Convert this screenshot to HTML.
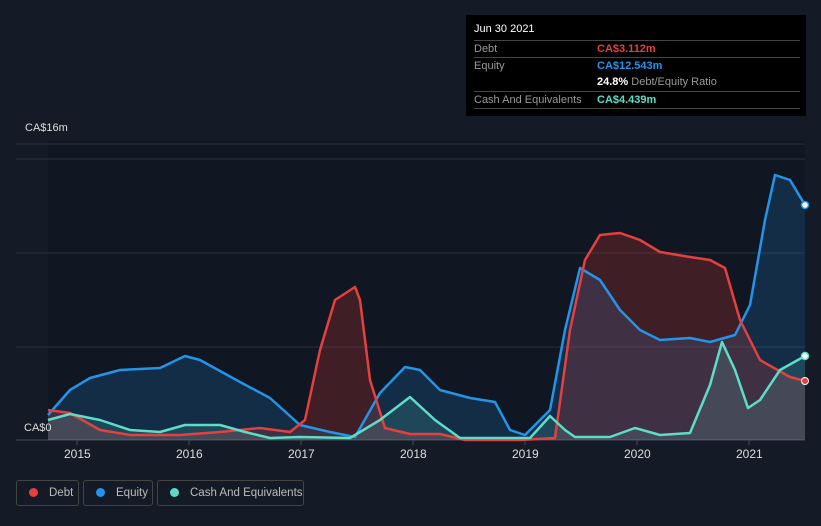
<!DOCTYPE html><html><head><style>
body{margin:0;width:821px;height:526px;background:#151b26;font-family:"Liberation Sans",sans-serif;overflow:hidden;position:relative}
.t{position:absolute;color:#ddd;font-size:11px}
.tip{position:absolute;left:466px;top:15px;width:340px;height:101px;background:#000;}
.r{position:absolute;left:8px;right:6px;font-size:11px;color:#999;border-top:1px solid #444;height:17px;line-height:17px}
.lg{position:absolute;top:480px;height:26px;border:1px solid #444;border-radius:3px;color:#bbb;font-size:11.5px;line-height:24px;box-sizing:border-box;white-space:nowrap;overflow:hidden}
.lg i{display:inline-block;width:9px;height:9px;border-radius:50%;margin:0 11px 0 12px;vertical-align:-1px}
</style></head><body>
<svg width="821" height="526" style="position:absolute;left:0;top:0">
<rect x="48" y="140" width="757" height="300" fill="#111722"/>
<g stroke="#2a303b" stroke-width="1"><line x1="16" y1="144" x2="805" y2="144"/><line x1="16" y1="159" x2="805" y2="159"/><line x1="16" y1="253" x2="805" y2="253"/><line x1="16" y1="347" x2="805" y2="347"/></g>
<line x1="16" y1="440" x2="805" y2="440" stroke="#444b55"/>
<g stroke="#444b55"><line x1="77" y1="440" x2="77" y2="445"/><line x1="189" y1="440" x2="189" y2="445"/><line x1="301" y1="440" x2="301" y2="445"/><line x1="413" y1="440" x2="413" y2="445"/><line x1="525" y1="440" x2="525" y2="445"/><line x1="637" y1="440" x2="637" y2="445"/><line x1="749" y1="440" x2="749" y2="445"/></g>
<g stroke-width="2.5" stroke-linejoin="round">
<polygon fill="rgba(33,150,243,0.18)" stroke="none" points="48,440 48,415 70,390 90,378 120,370 160,368 185,356 200,360 240,382 270,398 300,425 330,432 355,437 380,393 405,367 420,370 440,390 470,398 495,402 510,430 525,435 550,410 565,330 580,268 600,280 620,310 640,330 660,340 690,338 710,342 735,335 750,305 765,220 775,175 790,180 805,205 805,440"/>
<polygon fill="rgba(229,57,53,0.22)" stroke="none" points="48,440 48,410 70,413 100,430 130,435 180,435 220,432 260,428 290,432 305,420 320,350 335,300 355,287 360,300 370,380 385,428 410,434 440,434 465,440 520,440 555,438 570,330 585,260 600,235 620,233 640,240 660,252 690,257 710,260 725,268 740,320 760,360 790,377 805,381 805,440"/>
<polygon fill="rgba(100,220,200,0.15)" stroke="none" points="48,440 48,420 70,414 100,420 130,430 160,432 185,425 220,425 245,432 270,438 300,437 350,438 380,420 410,397 435,420 460,438 500,438 530,438 550,416 565,430 575,437 610,437 635,428 660,435 690,433 710,385 722,342 735,370 748,408 760,400 780,370 805,356 805,440"/>
<polyline fill="none" stroke="#2394e8" points="48,415 70,390 90,378 120,370 160,368 185,356 200,360 240,382 270,398 300,425 330,432 355,437 380,393 405,367 420,370 440,390 470,398 495,402 510,430 525,435 550,410 565,330 580,268 600,280 620,310 640,330 660,340 690,338 710,342 735,335 750,305 765,220 775,175 790,180 805,205"/>
<polyline fill="none" stroke="#e5403f" points="48,410 70,413 100,430 130,435 180,435 220,432 260,428 290,432 305,420 320,350 335,300 355,287 360,300 370,380 385,428 410,434 440,434 465,440 520,440 555,438 570,330 585,260 600,235 620,233 640,240 660,252 690,257 710,260 725,268 740,320 760,360 790,377 805,381"/>
<polyline fill="none" stroke="#5fdcc8" points="48,420 70,414 100,420 130,430 160,432 185,425 220,425 245,432 270,438 300,437 350,438 380,420 410,397 435,420 460,438 500,438 530,438 550,416 565,430 575,437 610,437 635,428 660,435 690,433 710,385 722,342 735,370 748,408 760,400 780,370 805,356"/>
</g>
<circle cx="805" cy="205" r="3.5" fill="#fff" stroke="#2394e8" stroke-width="1.5"/>
<circle cx="805" cy="381" r="3.5" fill="#e5403f" stroke="#fff" stroke-width="1"/>
<circle cx="805" cy="356" r="3.5" fill="#fff" stroke="#5fdcc8" stroke-width="1.5"/>
</svg>
<div class="t" style="left:25px;top:122px">CA$16m</div>
<div class="t" style="left:24px;top:422px">CA$0</div>
<div class="t" style="left:64px;top:447px;font-size:12px">2015</div>
<div class="t" style="left:176px;top:447px;font-size:12px">2016</div>
<div class="t" style="left:288px;top:447px;font-size:12px">2017</div>
<div class="t" style="left:400px;top:447px;font-size:12px">2018</div>
<div class="t" style="left:512px;top:447px;font-size:12px">2019</div>
<div class="t" style="left:624px;top:447px;font-size:12px">2020</div>
<div class="t" style="left:736px;top:447px;font-size:12px">2021</div>
<div class="tip">
<div style="position:absolute;left:8px;top:8px;color:#fff;font-size:11px">Jun 30 2021</div>
<div class="r" style="top:25px">Debt<span style="position:absolute;left:123px;color:#e5403f;font-weight:bold">CA$3.112m</span></div>
<div class="r" style="top:42px">Equity<span style="position:absolute;left:123px;color:#2394e8;font-weight:bold">CA$12.543m</span></div>
<div style="position:absolute;left:131px;top:59px;height:17px;line-height:17px;font-size:11px;color:#999"><b style="color:#fff">24.8%</b> Debt/Equity Ratio</div>
<div class="r" style="top:76px">Cash And Equivalents<span style="position:absolute;left:123px;color:#5fdcc8;font-weight:bold">CA$4.439m</span></div>
<div style="position:absolute;left:8px;right:6px;top:93px;border-top:1px solid #444"></div>
</div>
<div class="lg" style="left:16px;width:63px"><i style="background:#e5403f"></i>Debt</div>
<div class="lg" style="left:83px;width:70px"><i style="background:#2394e8"></i>Equity</div>
<div class="lg" style="left:157px;width:147px"><i style="background:#5fdcc8"></i>Cash And Equivalents</div>
</body></html>
